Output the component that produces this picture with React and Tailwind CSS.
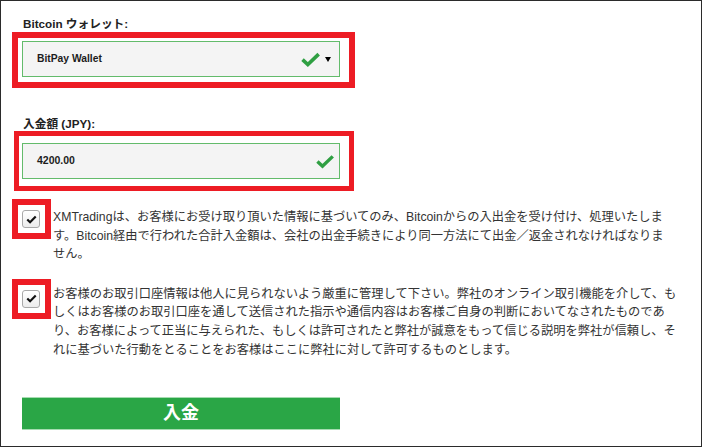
const FONT = "font-['Liberation_Sans','Noto_Sans_CJK_JP',sans-serif]"

function GreenCheck({ className }) {
  return (
    <svg viewBox="0 0 20 15" className={className}>
      <path d="M1.6 7.6 L7.2 12.8 L18.6 1.8" fill="none" stroke="#2f9f42" strokeWidth="3.8" />
    </svg>
  )
}

function Checkbox() {
  return (
    <div className="w-[18px] h-[18px] rounded-[3px] border border-[#a9a9a9] bg-gradient-to-b from-white to-[#ececec] flex items-center justify-center">
      <svg viewBox="0 0 12 10" className="w-[11px] h-[9px]">
        <path d="M1.3 5 L4.4 8 L10.7 1.6" fill="none" stroke="#111" strokeWidth="2.4" />
      </svg>
    </div>
  )
}

export default function App() {
  return (
    <div className={`w-[702px] h-[447px] border border-[#2b2b2b] bg-white pl-[11px] pt-[14px] ${FONT}`}>
      {/* ─── Wallet select ─── */}
      <label className="block ml-[11px] text-[11.7px] leading-[17px] font-bold text-[#222]">Bitcoin ウォレット:</label>
      <div className="w-[343px] border-[6px] border-[#ed1c24] pl-[4px] pr-[9px] pt-[3px] pb-[5px]">
        <div className="w-[318px] h-[36px] bg-[#f4f4f4] border border-[#63bb6b] flex items-center pl-[14px] pr-[8px]">
          <span className="text-[10.3px] font-bold text-[#1c1c1c]">BitPay Wallet</span>
          <GreenCheck className="ml-auto w-[19px] h-[15px]" />
          <span className="ml-[5px] w-0 h-0 border-x-[3px] border-x-transparent border-t-[5px] border-t-black" />
        </div>
      </div>

      {/* ─── Amount ─── */}
      <label className="block mt-[29px] ml-[11px] text-[11.7px] leading-[14px] font-bold text-[#222]">入金額 (JPY):</label>
      <div className="ml-[2px] w-[340px] border-[5px] border-[#ed1c24] pl-[3px] pr-[9px] pt-[7px] pb-[7px]">
        <div className="w-[318px] h-[36px] bg-[#f4f4f4] border border-[#63bb6b] flex items-center pl-[14px] pr-[5px]">
          <span className="text-[10.5px] font-bold text-[#1c1c1c]">4200.00</span>
          <GreenCheck className="ml-auto w-[18px] h-[15px]" />
        </div>
      </div>

      {/* ─── Agreements ─── */}
      <div className="flex items-start mt-[8px]">
        <div className="shrink-0 border-[6px] border-[#ed1c24] pl-[4px] pr-[5px] py-[5px]">
          <Checkbox />
        </div>
        <p className="ml-[2px] mt-[9px] w-[640px] text-[12.25px] leading-[18.6px] text-[#333]">
          XMTradingは、お客様にお受け取り頂いた情報に基づいてのみ、Bitcoinからの入出金を受け付け、処理いたしま<br />
          す。Bitcoin経由で行われた合計入金額は、会社の出金手続きにより同一方法にて出金／返金されなければなりま<br />
          せん。
        </p>
      </div>

      <div className="flex items-start mt-[15px]">
        <div className="shrink-0 border-[6px] border-[#ed1c24] pl-[4px] pr-[5px] py-[5px]">
          <Checkbox />
        </div>
        <p className="ml-[2px] mt-[6px] w-[640px] text-[12.25px] leading-[18.6px] text-[#333]">
          お客様のお取引口座情報は他人に見られないよう厳重に管理して下さい。弊社のオンライン取引機能を介して、も<br />
          しくはお客様のお取引口座を通して送信された指示や通信内容はお客様ご自身の判断においてなされたものであ<br />
          り、お客様によって正当に与えられた、もしくは許可されたと弊社が誠意をもって信じる説明を弊社が信頼し、そ<br />
          れに基づいた行動をとることをお客様はここに弊社に対して許可するものとします。
        </p>
      </div>

      {/* ─── Submit ─── */}
      <button className="mt-[38px] ml-[10px] w-[318px] h-[33px] bg-[#2aa646] border-y border-[#a6dcb1] text-white font-bold text-[18px] flex items-center justify-center">
        入金
      </button>
    </div>
  )
}
